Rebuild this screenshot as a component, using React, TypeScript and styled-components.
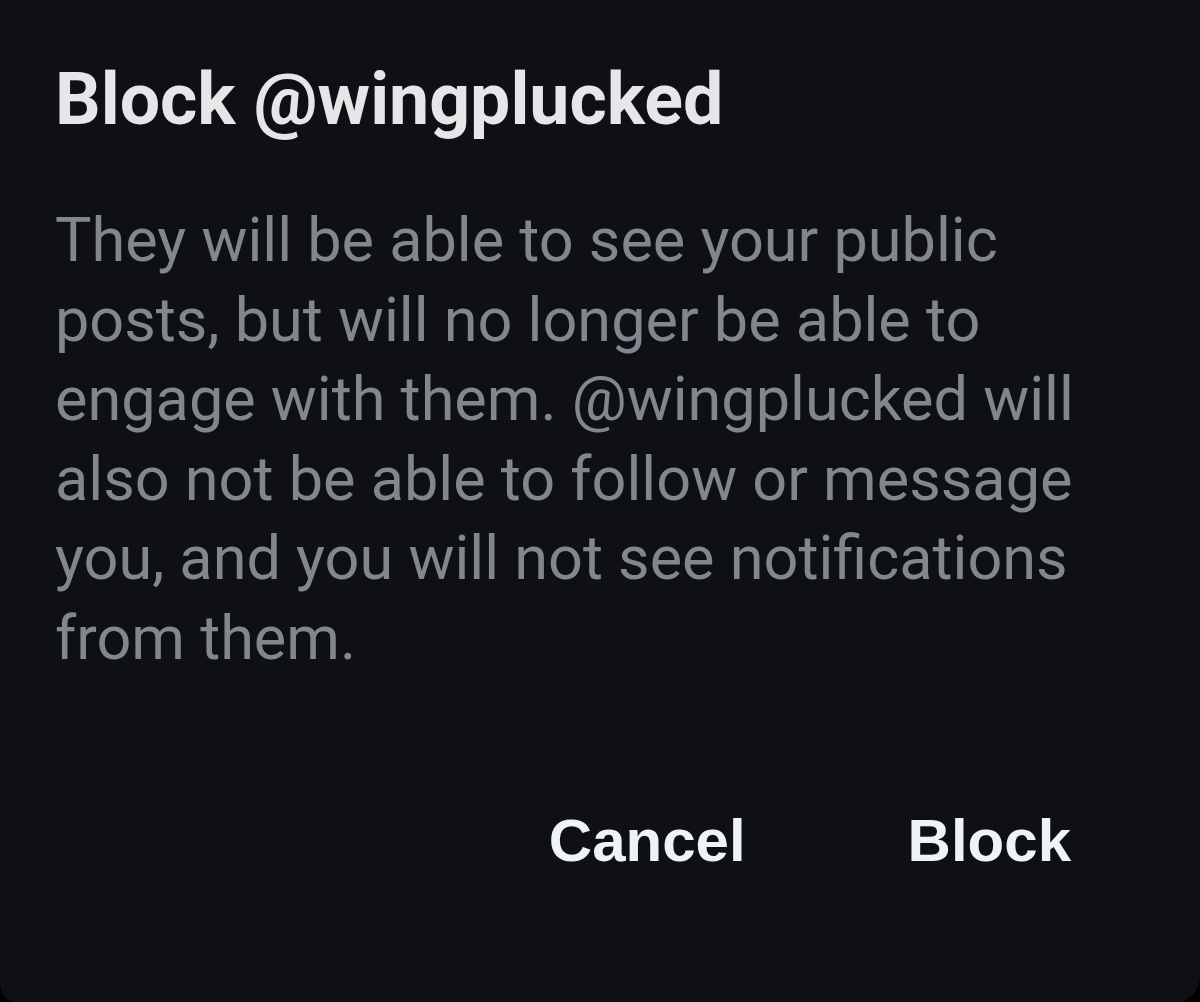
import React from "react";
import styled, { createGlobalStyle } from "styled-components";

const Global = createGlobalStyle`
  html, body {
    margin: 0;
    padding: 0;
    background: #000;
    overflow: hidden;
  }
  #root {
    width: 1200px;
    height: 1002px;
  }
`;

const Dialog = styled.div`
  box-sizing: border-box;
  width: 1200px;
  height: 1004px;
  background: #0f1013;
  border-bottom-left-radius: 20px;
  border-bottom-right-radius: 28px;
  padding: 56px 0 0 55px;
  display: flex;
  flex-direction: column;
`;

const Title = styled.h1`
  margin: 0;
  font-family: Roboto, "Liberation Sans", sans-serif;
  font-weight: 700;
  font-size: 71.6px;
  line-height: 88px;
  color: #e4e6e8;
`;

const Body = styled.p`
  margin: 57px 0 0;
  font-family: Roboto, "Liberation Sans", sans-serif;
  font-weight: 400;
  font-size: 61.2px;
  line-height: 79.5px;
  color: #81878e;
  white-space: pre-line;
`;

const Actions = styled.div`
  margin-top: auto;
  margin-bottom: 133px;
  display: flex;
  justify-content: flex-end;
  gap: 162px;
  padding-right: 129px;
`;

const ActionButton = styled.button`
  background: none;
  border: none;
  padding: 0;
  font-family: "Liberation Sans", Arial, sans-serif;
  font-weight: 700;
  font-size: 60px;
  line-height: 60px;
  color: #eff3f4;
  cursor: pointer;
`;

export default function App() {
  return (
    <>
      <Global />
      <Dialog>
        <Title>Block @wingplucked</Title>
        <Body>
          {"They will be able to see your public\nposts, but will no longer be able to\nengage with them. @wingplucked will\nalso not be able to follow or message\nyou, and you will not see notifications\nfrom them."}
        </Body>
        <Actions>
          <ActionButton>Cancel</ActionButton>
          <ActionButton>Block</ActionButton>
        </Actions>
      </Dialog>
    </>
  );
}
